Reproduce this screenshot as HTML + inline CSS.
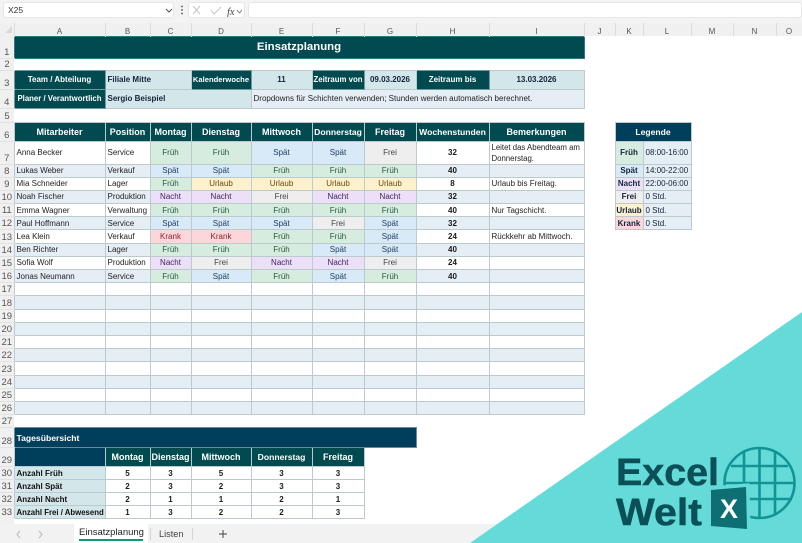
<!DOCTYPE html>
<html lang="de"><head><meta charset="utf-8"><title>Einsatzplanung</title>
<style>
html,body{margin:0;padding:0;width:802px;height:543px;overflow:hidden;background:#fff;font-family:"Liberation Sans",sans-serif}
#wrap{position:absolute;left:0;top:0;width:802px;height:543px;overflow:hidden;filter:blur(.3px)}
#fb{position:absolute;left:0;top:0;width:802px;height:23px;background:#f3f3f3;z-index:2}
.box{position:absolute;top:2px;height:16px;background:#fff;border:1px solid #e6e6e6;border-radius:3px;box-sizing:border-box}
table{position:absolute;left:0;top:19px;width:802px;border-collapse:collapse;table-layout:fixed;font-size:8px;color:#222}
td{padding:0 2px;overflow:hidden;white-space:nowrap;box-sizing:border-box;text-align:left}
tr.ch td{background:#f0f0f0;color:#555;text-align:center;font-size:8px;border-right:1px solid #dcdcdc;padding:0 0 0;vertical-align:bottom}
td.rh{background:#f0f0f0;color:#555;font-size:9.5px;line-height:11px;text-align:center;vertical-align:bottom;padding:0;border-bottom:1px solid #e2e2e2}
tr.g td:not(.rh):not(.o){border:1px solid #bccacd}
tr.a td{background:#e6eef5}
tr.a td.rh{background:#f0f0f0}
tr.a td.o{background:#fff}
td.h,tr.a td.h{background:#004a50;color:#fff;font-weight:bold;text-align:center;padding:0;border:1px solid #6f9a9d}
td.hh,tr.a td.hh,tr.g td.hh{background:#004a50;color:#fff;font-weight:bold;text-align:center;font-size:9px;padding:0;border:1px solid #9fbcc0}
tr.g td.hs{font-size:8.6px}
td.nv{background:#003f5c;color:#fff;font-weight:bold;font-size:8.6px;border:1px solid #6d8a99}
td.l{background:#d3e6e9;font-weight:bold;color:#14233c;border:1px solid #bccacd}
td.c{text-align:center}
td.b{font-weight:bold;text-align:center;color:#1a1a1a}
td.f,tr.a td.f{background:#d6ecde;color:#27593a;text-align:center}
td.s,tr.a td.s{background:#d8e9f8;color:#1f3f66;text-align:center}
td.n,tr.a td.n{background:#ebe0f7;color:#43215f;text-align:center}
td.r,tr.a td.r{background:#eeeeee;color:#444;text-align:center}
td.u,tr.a td.u{background:#fdf0cd;color:#6a4a0a;text-align:center}
td.k,tr.a td.k{background:#fdd6da;color:#8a2231;text-align:center}
td.lg{font-weight:bold;color:#14233c!important;padding:0}
td.lv,tr.a td.lv{background:#e6eef5;color:#14233c}
#tabs{position:absolute;left:0;top:524px;width:802px;height:19px;background:#f2f2f2;font-size:9.5px;color:#444}
#tabs span{position:absolute}
svg{position:absolute;left:0;top:0}
</style></head><body><div id="wrap">
<table>
<colgroup><col style="width:14px"><col style="width:91px"><col style="width:45px"><col style="width:41px"><col style="width:60px"><col style="width:61px"><col style="width:52px"><col style="width:52px"><col style="width:73px"><col style="width:95px"><col style="width:31px"><col style="width:28px"><col style="width:48px"><col style="width:42px"><col style="width:43px"><col style="width:26px"></colgroup>
<tr class="ch" style="height:17px"><td></td><td>A</td><td>B</td><td>C</td><td>D</td><td>E</td><td>F</td><td>G</td><td>H</td><td>I</td><td>J</td><td>K</td><td>L</td><td>M</td><td>N</td><td>O</td></tr>
<tr style="height:22px"><td class="rh">1</td><td colspan="9" class="h" style="font-size:11.4px;border-color:#2d7a7c">Einsatzplanung</td></tr>
<tr style="height:12px"><td class="rh">2</td></tr>
<tr style="height:19px"><td class="rh">3</td><td class="h">Team / Abteilung</td><td colspan="2" class="l">Filiale Mitte</td><td class="h" style="font-size:7.600px">Kalenderwoche</td><td class="l c">11</td><td class="h" style="font-size:7.800px">Zeitraum von</td><td class="l c">09.03.2026</td><td class="h">Zeitraum bis</td><td class="l c">13.03.2026</td></tr>
<tr style="height:19px"><td class="rh">4</td><td class="h" style="font-size:7.800px">Planer / Verantwortlich</td><td colspan="3" class="l">Sergio Beispiel</td><td colspan="5" style="background:#e6eef5;border:1px solid #bccacd">Dropdowns für Schichten verwenden; Stunden werden automatisch berechnet.</td></tr>
<tr style="height:14px"><td class="rh">5</td></tr>
<tr class="g" style="height:19px"><td class="rh">6</td><td class="hh">Mitarbeiter</td><td class="hh">Position</td><td class="hh">Montag</td><td class="hh">Dienstag</td><td class="hh">Mittwoch</td><td class="hh hs">Donnerstag</td><td class="hh">Freitag</td><td class="hh hs">Wochenstunden</td><td class="hh">Bemerkungen</td><td class="o"></td><td colspan="2" class="nv" style="text-align:center">Legende</td></tr>
<tr class="g" style="height:22px"><td class="rh">7</td><td>Anna Becker</td><td>Service</td><td class="f">Früh</td><td class="f">Früh</td><td class="s">Spät</td><td class="s">Spät</td><td class="r">Frei</td><td class="b">32</td><td style="white-space:normal;line-height:11px;font-size:7.800px">Leitet das Abendteam am Donnerstag.</td><td class="o"></td><td class="f lg">Früh</td><td class="lv">08:00-16:00</td></tr>
<tr class="g a" style="height:13.2px"><td class="rh">8</td><td>Lukas Weber</td><td>Verkauf</td><td class="s">Spät</td><td class="s">Spät</td><td class="f">Früh</td><td class="f">Früh</td><td class="f">Früh</td><td class="b">40</td><td></td><td class="o"></td><td class="s lg">Spät</td><td class="lv">14:00-22:00</td></tr>
<tr class="g" style="height:13.2px"><td class="rh">9</td><td>Mia Schneider</td><td>Lager</td><td class="f">Früh</td><td class="u">Urlaub</td><td class="u">Urlaub</td><td class="u">Urlaub</td><td class="u">Urlaub</td><td class="b">8</td><td>Urlaub bis Freitag.</td><td class="o"></td><td class="n lg">Nacht</td><td class="lv">22:00-06:00</td></tr>
<tr class="g a" style="height:13.2px"><td class="rh">10</td><td>Noah Fischer</td><td>Produktion</td><td class="n">Nacht</td><td class="n">Nacht</td><td class="r">Frei</td><td class="n">Nacht</td><td class="n">Nacht</td><td class="b">32</td><td></td><td class="o"></td><td class="r lg">Frei</td><td class="lv">0 Std.</td></tr>
<tr class="g" style="height:13.2px"><td class="rh">11</td><td>Emma Wagner</td><td>Verwaltung</td><td class="f">Früh</td><td class="f">Früh</td><td class="f">Früh</td><td class="f">Früh</td><td class="f">Früh</td><td class="b">40</td><td>Nur Tagschicht.</td><td class="o"></td><td class="u lg">Urlaub</td><td class="lv">0 Std.</td></tr>
<tr class="g a" style="height:13.2px"><td class="rh">12</td><td>Paul Hoffmann</td><td>Service</td><td class="s">Spät</td><td class="s">Spät</td><td class="s">Spät</td><td class="r">Frei</td><td class="s">Spät</td><td class="b">32</td><td></td><td class="o"></td><td class="k lg">Krank</td><td class="lv">0 Std.</td></tr>
<tr class="g" style="height:13.2px"><td class="rh">13</td><td>Lea Klein</td><td>Verkauf</td><td class="k">Krank</td><td class="k">Krank</td><td class="f">Früh</td><td class="f">Früh</td><td class="s">Spät</td><td class="b">24</td><td>Rückkehr ab Mittwoch.</td></tr>
<tr class="g a" style="height:13.2px"><td class="rh">14</td><td>Ben Richter</td><td>Lager</td><td class="f">Früh</td><td class="f">Früh</td><td class="f">Früh</td><td class="s">Spät</td><td class="s">Spät</td><td class="b">40</td><td></td></tr>
<tr class="g" style="height:13.2px"><td class="rh">15</td><td>Sofia Wolf</td><td>Produktion</td><td class="n">Nacht</td><td class="r">Frei</td><td class="n">Nacht</td><td class="n">Nacht</td><td class="r">Frei</td><td class="b">24</td><td></td></tr>
<tr class="g a" style="height:13.2px"><td class="rh">16</td><td>Jonas Neumann</td><td>Service</td><td class="f">Früh</td><td class="s">Spät</td><td class="f">Früh</td><td class="s">Spät</td><td class="f">Früh</td><td class="b">40</td><td></td></tr>
<tr class="g" style="height:13.2px"><td class="rh">17</td><td></td><td></td><td></td><td></td><td></td><td></td><td></td><td></td><td></td></tr>
<tr class="g a" style="height:13.2px"><td class="rh">18</td><td></td><td></td><td></td><td></td><td></td><td></td><td></td><td></td><td></td></tr>
<tr class="g" style="height:13.2px"><td class="rh">19</td><td></td><td></td><td></td><td></td><td></td><td></td><td></td><td></td><td></td></tr>
<tr class="g a" style="height:13.2px"><td class="rh">20</td><td></td><td></td><td></td><td></td><td></td><td></td><td></td><td></td><td></td></tr>
<tr class="g" style="height:13.2px"><td class="rh">21</td><td></td><td></td><td></td><td></td><td></td><td></td><td></td><td></td><td></td></tr>
<tr class="g a" style="height:13.2px"><td class="rh">22</td><td></td><td></td><td></td><td></td><td></td><td></td><td></td><td></td><td></td></tr>
<tr class="g" style="height:13.2px"><td class="rh">23</td><td></td><td></td><td></td><td></td><td></td><td></td><td></td><td></td><td></td></tr>
<tr class="g a" style="height:13.2px"><td class="rh">24</td><td></td><td></td><td></td><td></td><td></td><td></td><td></td><td></td><td></td></tr>
<tr class="g" style="height:13.2px"><td class="rh">25</td><td></td><td></td><td></td><td></td><td></td><td></td><td></td><td></td><td></td></tr>
<tr class="g a" style="height:13.2px"><td class="rh">26</td><td></td><td></td><td></td><td></td><td></td><td></td><td></td><td></td><td></td></tr>
<tr style="height:13px"><td class="rh">27</td></tr>
<tr style="height:20px"><td class="rh">28</td><td colspan="7" class="nv">Tagesübersicht</td></tr>
<tr class="g" style="height:19px"><td class="rh">29</td><td class="nv"></td><td class="hh">Montag</td><td class="hh">Dienstag</td><td class="hh">Mittwoch</td><td class="hh hs">Donnerstag</td><td class="hh">Freitag</td></tr>
<tr class="g" style="height:13px"><td class="rh">30</td><td class="l" style="color:#111">Anzahl Früh</td><td class="b">5</td><td class="b">3</td><td class="b">5</td><td class="b">3</td><td class="b">3</td></tr>
<tr class="g" style="height:13px"><td class="rh">31</td><td class="l" style="color:#111">Anzahl Spät</td><td class="b">2</td><td class="b">3</td><td class="b">2</td><td class="b">3</td><td class="b">3</td></tr>
<tr class="g" style="height:13px"><td class="rh">32</td><td class="l" style="color:#111">Anzahl Nacht</td><td class="b">2</td><td class="b">1</td><td class="b">1</td><td class="b">2</td><td class="b">1</td></tr>
<tr class="g" style="height:13px"><td class="rh">33</td><td class="l" style="color:#111;font-size:7.800px;padding:0 0 0 2px">Anzahl Frei / Abwesend</td><td class="b">1</td><td class="b">3</td><td class="b">2</td><td class="b">2</td><td class="b">3</td></tr>
</table>
<div style="position:absolute;left:0;top:518px;width:14px;height:6px;background:#f0f0f0"></div>
<div id="fb">
<div class="box" style="left:3px;width:171px"><span style="position:absolute;left:4px;top:2px;font-size:8.5px;color:#333">X25</span>
<svg style="left:161px;top:5px" width="8" height="6"><path d="M1 1l3 3 3-3" fill="none" stroke="#555"/></svg></div>
<svg style="left:179px;top:5px" width="6" height="11"><circle cx="3" cy="1.500" r=".9" fill="#555"/><circle cx="3" cy="5" r=".9" fill="#555"/><circle cx="3" cy="8.500" r=".9" fill="#555"/></svg>
<div class="box" style="left:188px;width:57px">
<svg style="left:3px;top:2px" width="50" height="12"><path d="M1 1l7 8M8 1l-7 8" stroke="#c4c4c4" fill="none"/><path d="M19 5l3 4 7-7" stroke="#c4c4c4" fill="none"/><text x="35" y="10" font-family="Liberation Serif" font-style="italic" font-size="10.500" fill="#444">fx</text><path d="M45 5l2.500 3 2.500-3" stroke="#888" fill="none"/></svg></div>
<div class="box" style="left:248px;width:554px"></div>
</div>
<svg style="left:5px;top:26px;z-index:3" width="8" height="8"><polygon points="7,0 7,7 0,7" fill="#d8d8d8"/></svg>
<div id="tabs">
<svg style="left:14px;top:6px" width="34" height="9"><path d="M6 1L3 4.500l3 3.500M25 1l3 3.500-3 3.500" fill="none" stroke="#bbb"/></svg>
<div style="position:absolute;left:74px;top:-1px;width:74px;height:20px;background:#fff;border-radius:3px 3px 0 0"></div>
<span style="left:79px;top:3px;color:#222">Einsatzplanung</span>
<div style="position:absolute;left:79px;top:15px;width:64px;height:2px;background:#0d9a72"></div>
<span style="left:159px;top:5px;font-size:9.200px">Listen</span>
<div style="position:absolute;left:150px;top:4px;width:1px;height:12px;background:#d5d5d5"></div>
<div style="position:absolute;left:192px;top:4px;width:1px;height:12px;background:#d5d5d5"></div>
<svg style="left:218px;top:5px" width="10" height="10"><path d="M5 1v8M1 5h8" stroke="#444" fill="none"/></svg>
</div>
<svg width="802" height="543" viewBox="0 0 802 543">
<polygon points="802,312 802,543 470,543" fill="#64dbd9"/>
<g fill="none" stroke="#129496" stroke-width="2.600">
<circle cx="759.500" cy="483" r="35"/>
<path d="M744 451V515M759.500 448V518M775 451V515M731 466H788M725 483H794M727 499H792"/>
</g>
<text x="616" y="485" font-family="Liberation Sans" font-weight="bold" font-size="38" fill="#0b5058" stroke="#0b5058" stroke-width=".5" textLength="103" lengthAdjust="spacingAndGlyphs">Excel</text>
<text x="616" y="525" font-family="Liberation Sans" font-weight="bold" font-size="38" fill="#0b5058" stroke="#0b5058" stroke-width=".5" textLength="86" lengthAdjust="spacingAndGlyphs">Welt</text>
<polygon points="711,490 746,487 747,529 711,526" fill="#0d6f74" stroke="#64dbd9" stroke-width="7" paint-order="stroke"/>
<text x="729" y="518" text-anchor="middle" font-family="Liberation Sans" font-weight="bold" font-size="27" fill="#fff">X</text>
</svg>
</div></body></html>
